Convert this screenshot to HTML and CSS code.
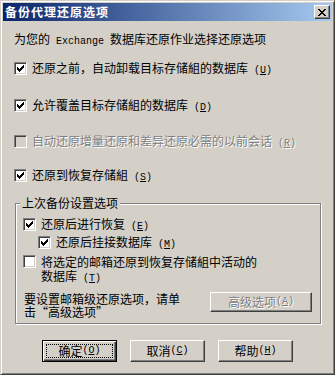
FILE: index.html
```html
<!DOCTYPE html>
<html lang="zh-CN">
<head>
  <meta charset="UTF-8" />
  <title>备份代理还原选项</title>
  <link rel="stylesheet" href="styles.css">
</head>
<body>

  <div class="window">
    <!-- Title bar -->
    <div class="titlebar">
      <span class="title">备份代理还原选项</span>
      <span class="close">
        <svg width="8" height="7" viewBox="0 0 8 7" shape-rendering="crispEdges"><path d="M0 0h2v1h-2zM6 0h2v1h-2zM1 1h2v1h-2zM5 1h2v1h-2zM2 2h4v1h-4zM3 3h2v1h-2zM2 4h4v1h-4zM1 5h2v1h-2zM5 5h2v1h-2zM0 6h2v1h-2zM6 6h2v1h-2z"/></svg>
      </span>
    </div>

    <div class="content">
      <p class="intro">为您的<span class="en"> Exchange </span>数据库还原作业选择还原选项</p>

      <div class="row r1">
        <span class="cb"><svg class="tick" width="7" height="7" viewBox="0 0 7 7" shape-rendering="crispEdges"><path d="M6 0h1v1h-1zM5 1h2v1h-2zM0 2h1v1h-1zM4 2h3v1h-3zM0 3h2v1h-2zM3 3h3v1h-3zM0 4h5v1h-5zM1 5h3v1h-3zM2 6h1v1h-1z"/></svg></span>
        <span>还原之前，自动卸载目标存储組的数据库<span class="en"> (<u>U</u>)</span></span>
      </div>

      <div class="row r2">
        <span class="cb"><svg class="tick" width="7" height="7" viewBox="0 0 7 7" shape-rendering="crispEdges"><path d="M6 0h1v1h-1zM5 1h2v1h-2zM0 2h1v1h-1zM4 2h3v1h-3zM0 3h2v1h-2zM3 3h3v1h-3zM0 4h5v1h-5zM1 5h3v1h-3zM2 6h1v1h-1z"/></svg></span>
        <span>允许覆盖目标存储組的数据库<span class="en"> (<u>D</u>)</span></span>
      </div>

      <div class="row r3 disabled">
        <span class="cb"></span>
        <span>自动还原增量还原和差异还原必需的以前会话<span class="en"> (<u>R</u>)</span></span>
      </div>

      <div class="row r4">
        <span class="cb"><svg class="tick" width="7" height="7" viewBox="0 0 7 7" shape-rendering="crispEdges"><path d="M6 0h1v1h-1zM5 1h2v1h-2zM0 2h1v1h-1zM4 2h3v1h-3zM0 3h2v1h-2zM3 3h3v1h-3zM0 4h5v1h-5zM1 5h3v1h-3zM2 6h1v1h-1z"/></svg></span>
        <span>还原到恢复存储組<span class="en"> (<u>S</u>)</span></span>
      </div>

      <!-- Last backup settings group -->
      <div class="group">
        <div class="legend">上次备份设置选项</div>

        <div class="row r5">
          <span class="cb"><svg class="tick" width="7" height="7" viewBox="0 0 7 7" shape-rendering="crispEdges"><path d="M6 0h1v1h-1zM5 1h2v1h-2zM0 2h1v1h-1zM4 2h3v1h-3zM0 3h2v1h-2zM3 3h3v1h-3zM0 4h5v1h-5zM1 5h3v1h-3zM2 6h1v1h-1z"/></svg></span>
          <span>还原后进行恢复<span class="en"> (<u>E</u>)</span></span>
        </div>

        <div class="row r6">
          <span class="cb"><svg class="tick" width="7" height="7" viewBox="0 0 7 7" shape-rendering="crispEdges"><path d="M6 0h1v1h-1zM5 1h2v1h-2zM0 2h1v1h-1zM4 2h3v1h-3zM0 3h2v1h-2zM3 3h3v1h-3zM0 4h5v1h-5zM1 5h3v1h-3zM2 6h1v1h-1z"/></svg></span>
          <span>还原后挂接数据库<span class="en"> (<u>M</u>)</span></span>
        </div>

        <div class="row r7 multi">
          <span class="cb"></span>
          <span class="lines">
            <span class="line">将选定的邮箱还原到恢复存储組中活动的</span>
            <span class="line">数据库<span class="en"> (<u>T</u>)</span></span>
          </span>
        </div>

        <div class="advanced">
          <span class="hint">
            <span class="line">要设置邮箱级还原选项，请单</span>
            <span class="line">击“高级选项”</span>
          </span>
          <span class="btn adv-btn">高级选项<span class="en"> (<u>A</u>)</span></span>
        </div>
      </div>

      <!-- Dialog buttons -->
      <div class="buttons">
        <span class="btn default"><span class="focus">确定<span class="en"> (<u>O</u>)</span></span></span>
        <span class="btn">取消<span class="en"> (<u>C</u>)</span></span>
        <span class="btn">帮助<span class="en"> (<u>H</u>)</span></span>
      </div>
    </div>
  </div>

</body>
</html>
```

FILE: styles.css
```css
body {
  margin: 0;
  background-color: #d4d0c8;
  font-family: "Noto Sans CJK SC", sans-serif;
  font-size: 12px;
  color: #000;
}

.en {
  font-family: "Liberation Mono", monospace;
  font-size: 10px;
  line-height: 10px;
}

/* window frame */
.window {
  width: 335px;
  height: 375px;
  box-sizing: border-box;
  border: 1px solid;
  border-color: #d4d0c8 #404040 #404040 #d4d0c8;
  box-shadow: inset 1px 1px #fff, inset -1px -1px #808080;
  padding: 2px;
  overflow: hidden;
}

.titlebar {
  height: 18px;
  background: linear-gradient(to right, #0a246a, #a6caf0);
  display: flex;
  justify-content: space-between;
  align-items: center;
  padding: 0 2px;
}

.title {
  color: white;
  font-weight: bold;
  letter-spacing: 1px;
  line-height: 18px;
}

.close {
  width: 16px;
  height: 14px;
  box-sizing: border-box;
  background-color: #d4d0c8;
  border: 1px solid;
  border-color: #fff #404040 #404040 #fff;
  box-shadow: inset -1px -1px #808080;
  display: flex;
  justify-content: center;
  align-items: center;
}

.content {
  padding-left: 11px;
}

.intro {
  margin: 11px 0 0;
  height: 14px;
  line-height: 14px;
}

/* checkbox rows */
.row {
  display: flex;
  align-items: center;
  gap: 5px;
  height: 14px;
  line-height: 14px;
}

.row.multi {
  align-items: flex-start;
  height: auto;
}

.cb {
  width: 13px;
  height: 13px;
  flex: none;
  box-sizing: border-box;
  background: white;
  border: 1px solid;
  border-color: #808080 #fff #fff #808080;
  box-shadow: inset 1px 1px #404040, inset -1px -1px #d4d0c8;
  display: flex;
  justify-content: center;
  align-items: center;
}

.disabled { color: #808080; text-shadow: 1px 1px #fff; }
.disabled .cb { background-color: #d4d0c8; }

.r1 { margin-top: 15px; }
.r2 { margin-top: 23px; }
.r3 { margin-top: 22px; }
.r4 { margin-top: 20px; }

/* group box */
.group {
  width: 306px;
  height: 121px;
  box-sizing: border-box;
  margin: 21px 0 0 1px;
  border: 1px solid #808080;
  box-shadow: 1px 1px #fff, inset 1px 1px #fff;
  padding-left: 7px;
}

.legend {
  width: fit-content;
  margin: -8px 0 0 -3px;
  padding: 0 2px;
  height: 14px;
  line-height: 14px;
  background-color: #d4d0c8;
}

.r5 { margin-top: 7px; }
.r6 { margin-top: 4px; margin-left: 15px; }
.r7 { margin-top: 6px; }

.lines, .hint {
  display: flex;
  flex-direction: column;
}

.lines .line {
  height: 14px;
  line-height: 14px;
}

.hint .line {
  height: 13px;
  line-height: 13px;
}

.advanced {
  margin-top: 9px;
  display: flex;
  justify-content: space-between;
  padding-right: 8px;
}

.hint {
  margin-left: 1px;
}

/* push buttons */
.btn {
  width: 75px;
  height: 22px;
  box-sizing: border-box;
  border: 1px solid;
  border-color: #fff #404040 #404040 #fff;
  box-shadow: inset -1px -1px #808080;
  display: flex;
  justify-content: center;
  align-items: center;
  line-height: 14px;
}

.adv-btn {
  width: 102px;
  height: 20px;
  color: #808080;
  text-shadow: 1px 1px #fff;
}

.buttons {
  display: flex;
  gap: 13px;
  margin: 16px 0 0 28px;
}

.btn.default {
  border-color: #000;
  box-shadow: inset 1px 1px #fff, inset -1px -1px #404040, inset -2px -2px #808080;
}

.focus {
  flex: 1;
  align-self: stretch;
  margin: 3px;
  border: 1px dotted #000;
  display: flex;
  justify-content: center;
  align-items: center;
}
```
